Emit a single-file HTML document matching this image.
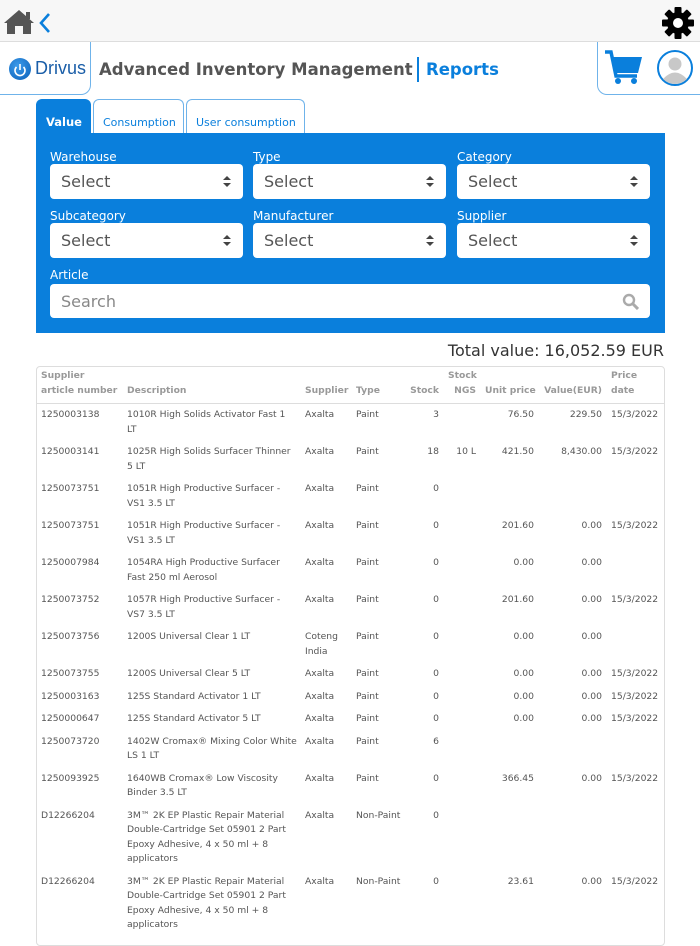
<!DOCTYPE html>
<html><head><meta charset="utf-8"><style>
*{box-sizing:border-box;margin:0;padding:0}
body{width:700px;height:934px;overflow:hidden;background:#fff;font-family:"DejaVu Sans","Liberation Sans",sans-serif;color:#555;position:relative}
.top{position:absolute;left:0;top:0;width:700px;height:42px;background:#f7f7f7;border-bottom:1px solid #ddd}
.abs{position:absolute;white-space:nowrap}
.lab{position:absolute;color:#fff;font-size:12px}
.sel{position:absolute;background:#fff;border-radius:4px;height:35px;width:193px;font-size:16px;color:#555;padding:8px 0 0 11px}
.sel:after{content:"";position:absolute;right:12px;top:12px;border-left:4px solid transparent;border-right:4px solid transparent;border-bottom:4px solid #444}
.sel:before{content:"";position:absolute;right:12px;top:19px;border-left:4px solid transparent;border-right:4px solid transparent;border-top:4px solid #444}
table{position:absolute;left:36px;top:366px;width:629px;border-collapse:collapse;table-layout:fixed;font-size:9.2px;color:#555}
td,th{vertical-align:top;padding:4px 4px 4px 5px;line-height:14.5px;text-align:left;white-space:nowrap;overflow:visible}
th{color:#999;font-weight:bold;font-size:9.2px;vertical-align:bottom;border-bottom:1px solid #ddd;padding-top:3px;padding-bottom:5px}
.r{text-align:right}
.box{position:absolute;left:36px;top:366px;width:629px;height:580px;border:1px solid #ddd;border-radius:4px}
</style></head><body>
<div class="top"></div>
<svg class="abs" style="left:3px;top:9px" width="32" height="26" viewBox="0 0 32 26"><path d="M16 1 L1 14 L4 14 L4 25 L12 25 L12 17 L20 17 L20 25 L28 25 L28 14 L31 14 Z" fill="#555"/><rect x="23" y="3" width="4" height="7" fill="#555"/></svg>
<svg class="abs" style="left:38px;top:12px" width="14" height="22" viewBox="0 0 14 22"><path d="M11 2 L3 11 L11 20" stroke="#0a7fdc" stroke-width="2.6" fill="none"/></svg>
<svg class="abs" style="left:661px;top:6px" width="34" height="34" viewBox="0 0 34 34"><g fill="#000"><circle cx="17" cy="17" r="11"/><g id="t"><rect x="13.5" y="1" width="7" height="7" rx="1"/></g><use href="#t" transform="rotate(45 17 17)"/><use href="#t" transform="rotate(90 17 17)"/><use href="#t" transform="rotate(135 17 17)"/><use href="#t" transform="rotate(180 17 17)"/><use href="#t" transform="rotate(225 17 17)"/><use href="#t" transform="rotate(270 17 17)"/><use href="#t" transform="rotate(315 17 17)"/></g><circle cx="17" cy="17" r="5" fill="#fff"/></svg>
<div class="abs" style="left:-10px;top:42px;width:101px;height:53px;border:1px solid #6fb3ea;border-top:none;border-left:none;border-radius:0 0 10px 0"></div>
<div class="abs" style="left:9px;top:58px;width:22px;height:22px;border-radius:50%;background:radial-gradient(circle at 40% 35%,#3c9bea,#0a5fb8)"></div>
<svg class="abs" style="left:9px;top:58px" width="22" height="22"><path d="M7.5 9 A5 5 0 1 0 14.5 9" stroke="#fff" stroke-width="1.6" fill="none"/><line x1="11" y1="6" x2="11" y2="12" stroke="#fff" stroke-width="1.6"/></svg>
<div class="abs" style="left:35px;top:58px;font-size:18px;color:#1a5ea8;font-family:'Liberation Sans',sans-serif">Drivus</div>
<div class="abs" style="left:99px;top:60px;font-size:16.5px;font-weight:bold;color:#555">Advanced Inventory Management</div>
<div class="abs" style="left:417px;top:57px;width:2px;height:25px;background:#0a7fdc"></div>
<div class="abs" style="left:426px;top:60px;font-size:16.5px;font-weight:bold;color:#0a7fdc">Reports</div>
<div class="abs" style="left:597px;top:42px;width:120px;height:53px;border:1px solid #6fb3ea;border-top:none;border-radius:0 0 0 10px"></div>
<svg class="abs" style="left:604px;top:49px" width="40" height="38" viewBox="0 0 40 38"><path d="M1 3 L7 3 L12 27 L33 27" stroke="#0a7fdc" stroke-width="3.5" fill="none"/><path d="M8 8 L38 8 L34 24 L11 24 Z" fill="#0a7fdc"/><circle cx="14" cy="32" r="3" fill="#0a7fdc"/><circle cx="30" cy="32" r="3" fill="#0a7fdc"/></svg>
<svg class="abs" style="left:656px;top:49px" width="38" height="38" viewBox="0 0 38 38"><circle cx="19" cy="19" r="17" fill="#fff" stroke="#0a7fdc" stroke-width="2"/><circle cx="19" cy="15" r="6.5" fill="#c8c8c8"/><path d="M7 30 Q19 17 31 30 A17 17 0 0 1 7 30Z" fill="#c8c8c8"/></svg>
<div class="abs" style="left:36px;top:99px;width:55px;height:36px;background:#0a7fdc;border-radius:6px 6px 0 0;color:#fff;font-weight:bold;font-size:11.5px;padding:16px 0 0 10px">Value</div>
<div class="abs" style="left:93px;top:99px;width:91px;height:35px;border:1px solid #6fb3ea;border-bottom:none;border-radius:6px 6px 0 0;color:#0a7fdc;font-size:11px;padding:16px 0 0 9px">Consumption</div>
<div class="abs" style="left:186px;top:99px;width:119px;height:35px;border:1px solid #6fb3ea;border-bottom:none;border-radius:6px 6px 0 0;color:#0a7fdc;font-size:11px;padding:16px 0 0 9px">User consumption</div>
<div class="abs" style="left:36px;top:133px;width:629px;height:200px;background:#0a7fdc"></div>
<div class="lab" style="left:50px;top:150px">Warehouse</div><div class="lab" style="left:253px;top:150px">Type</div><div class="lab" style="left:457px;top:150px">Category</div>
<div class="sel" style="left:50px;top:164px">Select</div><div class="sel" style="left:253px;top:164px">Select</div><div class="sel" style="left:457px;top:164px">Select</div>
<div class="lab" style="left:50px;top:209px">Subcategory</div><div class="lab" style="left:253px;top:209px">Manufacturer</div><div class="lab" style="left:457px;top:209px">Supplier</div>
<div class="sel" style="left:50px;top:223px">Select</div><div class="sel" style="left:253px;top:223px">Select</div><div class="sel" style="left:457px;top:223px">Select</div>
<div class="lab" style="left:50px;top:268px">Article</div>
<div class="abs" style="left:50px;top:284px;width:600px;height:34px;background:#fff;border-radius:4px;font-size:16px;color:#888;padding:8px 0 0 11px">Search</div>
<svg class="abs" style="left:622px;top:293px" width="17" height="17"><circle cx="7" cy="7" r="5" stroke="#aaa" stroke-width="2.4" fill="none"/><line x1="11" y1="11" x2="16" y2="16" stroke="#aaa" stroke-width="3"/></svg>
<div class="abs" style="right:36px;top:341px;font-size:16px;color:#333">Total value: 16,052.59 EUR</div>
<div class="box"></div>
<table>
<colgroup><col style="width:86px"><col style="width:178px"><col style="width:51px"><col style="width:49px"><col style="width:43px"><col style="width:37px"><col style="width:58px"><col style="width:68px"><col style="width:59px"></colgroup>
<tr><th>Supplier<br>article number</th><th>Description</th><th>Supplier</th><th>Type</th><th class="r">Stock</th><th class="r">Stock<br>NGS</th><th class="r">Unit price</th><th class="r">Value(EUR)</th><th>Price<br>date</th></tr>
<tr><td>1250003138</td><td>1010R High Solids Activator Fast 1<br>LT</td><td>Axalta</td><td>Paint</td><td class="r">3</td><td></td><td class="r">76.50</td><td class="r">229.50</td><td>15/3/2022</td></tr>
<tr><td>1250003141</td><td>1025R High Solids Surfacer Thinner<br>5 LT</td><td>Axalta</td><td>Paint</td><td class="r">18</td><td class="r">10 L</td><td class="r">421.50</td><td class="r">8,430.00</td><td>15/3/2022</td></tr>
<tr><td>1250073751</td><td>1051R High Productive Surfacer -<br>VS1 3.5 LT</td><td>Axalta</td><td>Paint</td><td class="r">0</td><td></td><td></td><td></td><td></td></tr>
<tr><td>1250073751</td><td>1051R High Productive Surfacer -<br>VS1 3.5 LT</td><td>Axalta</td><td>Paint</td><td class="r">0</td><td></td><td class="r">201.60</td><td class="r">0.00</td><td>15/3/2022</td></tr>
<tr><td>1250007984</td><td>1054RA High Productive Surfacer<br>Fast 250 ml Aerosol</td><td>Axalta</td><td>Paint</td><td class="r">0</td><td></td><td class="r">0.00</td><td class="r">0.00</td><td></td></tr>
<tr><td>1250073752</td><td>1057R High Productive Surfacer -<br>VS7 3.5 LT</td><td>Axalta</td><td>Paint</td><td class="r">0</td><td></td><td class="r">201.60</td><td class="r">0.00</td><td>15/3/2022</td></tr>
<tr><td>1250073756</td><td>1200S Universal Clear 1 LT</td><td>Coteng<br>India</td><td>Paint</td><td class="r">0</td><td></td><td class="r">0.00</td><td class="r">0.00</td><td></td></tr>
<tr><td>1250073755</td><td>1200S Universal Clear 5 LT</td><td>Axalta</td><td>Paint</td><td class="r">0</td><td></td><td class="r">0.00</td><td class="r">0.00</td><td>15/3/2022</td></tr>
<tr><td>1250003163</td><td>125S Standard Activator 1 LT</td><td>Axalta</td><td>Paint</td><td class="r">0</td><td></td><td class="r">0.00</td><td class="r">0.00</td><td>15/3/2022</td></tr>
<tr><td>1250000647</td><td>125S Standard Activator 5 LT</td><td>Axalta</td><td>Paint</td><td class="r">0</td><td></td><td class="r">0.00</td><td class="r">0.00</td><td>15/3/2022</td></tr>
<tr><td>1250073720</td><td>1402W Cromax® Mixing Color White<br>LS 1 LT</td><td>Axalta</td><td>Paint</td><td class="r">6</td><td></td><td></td><td></td><td></td></tr>
<tr><td>1250093925</td><td>1640WB Cromax® Low Viscosity<br>Binder 3.5 LT</td><td>Axalta</td><td>Paint</td><td class="r">0</td><td></td><td class="r">366.45</td><td class="r">0.00</td><td>15/3/2022</td></tr>
<tr><td>D12266204</td><td>3M™ 2K EP Plastic Repair Material<br>Double-Cartridge Set 05901 2 Part<br>Epoxy Adhesive, 4 x 50 ml + 8<br>applicators</td><td>Axalta</td><td>Non-Paint</td><td class="r">0</td><td></td><td></td><td></td><td></td></tr>
<tr><td>D12266204</td><td>3M™ 2K EP Plastic Repair Material<br>Double-Cartridge Set 05901 2 Part<br>Epoxy Adhesive, 4 x 50 ml + 8<br>applicators</td><td>Axalta</td><td>Non-Paint</td><td class="r">0</td><td></td><td class="r">23.61</td><td class="r">0.00</td><td>15/3/2022</td></tr>
</table>
</body></html>
